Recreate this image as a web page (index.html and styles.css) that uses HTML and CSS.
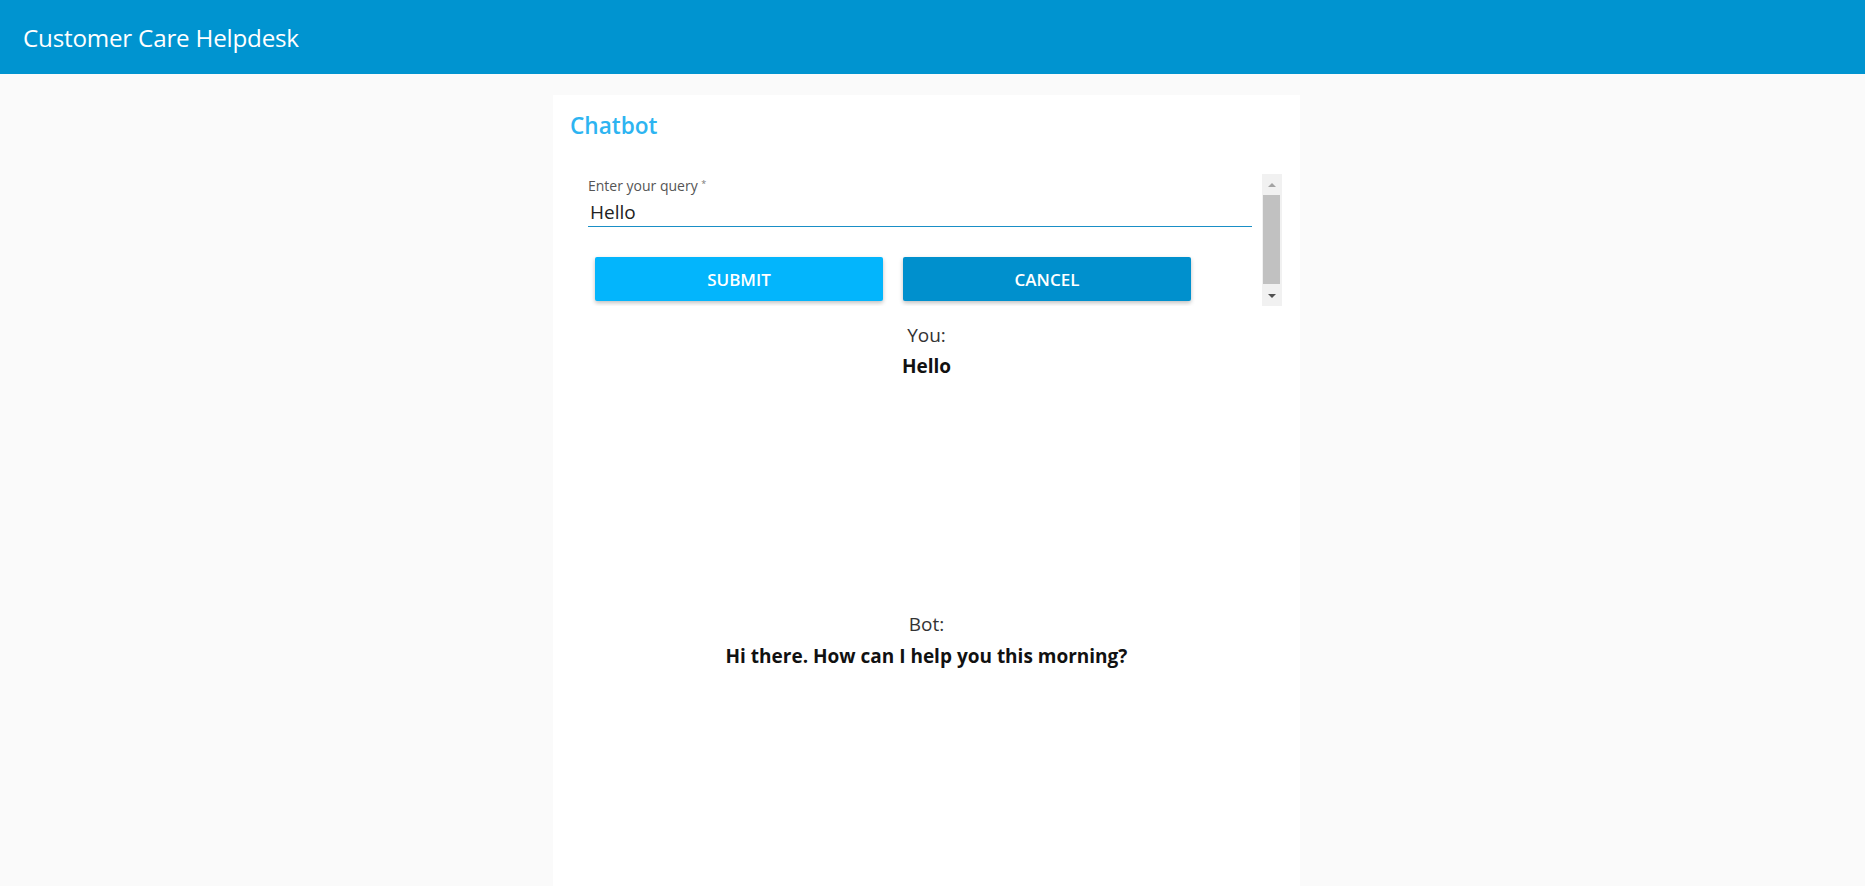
FILE: index.html
```html
<!DOCTYPE html>
<html lang="en">
<head>
<meta charset="utf-8">
<title>Customer Care Helpdesk</title>
<link rel="stylesheet" href="styles.css">
</head>
<body>
<header class="appbar">
  <h1 class="appbar-title">Customer Care Helpdesk</h1>
</header>
<main class="page">
  <section class="card">
    <h2 class="card-title">Chatbot</h2>
    <div class="form-scroll">
      <div class="form-inner">
        <div class="field">
          <label class="field-label" for="q">Enter your query <span class="req">*</span></label>
          <input class="field-input" id="q" type="text" value="Hello">
        </div>
        <div class="actions">
          <button class="btn btn-submit" type="button">SUBMIT</button>
          <button class="btn btn-cancel" type="button">CANCEL</button>
        </div>
      </div>
      <div class="scrollbar" aria-hidden="true">
        <div class="sb-btn sb-up"><span class="arrow arrow-up"></span></div>
        <div class="sb-track"><div class="sb-thumb"></div></div>
        <div class="sb-btn sb-down"><span class="arrow arrow-down"></span></div>
      </div>
    </div>
    <div class="chat">
      <div class="msg msg-you">
        <div class="msg-who">You:</div>
        <div class="msg-text">Hello</div>
      </div>
      <div class="msg msg-bot">
        <div class="msg-who">Bot:</div>
        <div class="msg-text msg-text-bot">Hi there. How can I help you this morning?</div>
      </div>
    </div>
  </section>
</main>
</body>
</html>
```
FILE: styles.css
```css
html, body {
  margin: 0;
  padding: 0;
  height: 100%;
}
body {
  background: #fafafa;
  font-family: "Open Sans", "Noto Sans", "Liberation Sans", sans-serif;
  color: #212121;
  overflow: hidden;
}
.appbar {
  height: 74px;
  background: #0094d0;
  display: flex;
  align-items: center;
  padding-left: 23px;
}
.appbar-title {
  margin: 0;
  font-size: 24.2px;
  font-weight: 400;
  color: #ffffff;
  letter-spacing: -0.2px;
}
.page {
  padding-top: 21px;
}
.card {
  width: 747px;
  margin-left: calc(50% - 379.5px);
  background: #ffffff;
  height: 800px;
  padding-top: 16px;
  box-sizing: border-box;
}
.card-title {
  margin: 0 0 0 17px;
  font-size: 22.6px;
  font-weight: 600;
  color: #2db4f1;
  line-height: 30px;
}
.form-scroll {
  margin: 33px 0 0 27px;
  width: 702px;
  height: 132px;
  display: flex;
}
.form-inner {
  flex: 1;
  min-width: 0;
  padding: 3px 10px 0 8px;
  overflow: hidden;
}
.field {
  display: flex;
  flex-direction: column;
}
.field-label {
  font-size: 14px;
  color: #555555;
  line-height: 17px;
}
.req {
  font-size: 9px;
  line-height: 0;
  vertical-align: 4px;
  color: #777777;
}
.field-input {
  border: none;
  border-bottom: 1px solid #1a8fc6;
  outline: none;
  font-family: inherit;
  font-size: 19px;
  color: #222222;
  padding: 6px 0 2px 2px;
  margin: 0;
  line-height: 24px;
  height: 33px;
  box-sizing: border-box;
  background: transparent;
}
.actions {
  display: flex;
  gap: 20px;
  margin: 30px 0 0 7px;
}
.btn {
  width: 288px;
  height: 44px;
  border: none;
  border-radius: 2px;
  color: #ffffff;
  font-family: inherit;
  font-size: 17px;
  font-weight: 600;
  padding: 0;
  box-shadow: 0 2px 4px rgba(0, 0, 0, 0.25);
}
.btn-submit {
  background: #03b5fc;
}
.btn-cancel {
  background: #0090cd;
}
.scrollbar {
  width: 20px;
  flex: none;
  background: #f1f1f1;
  display: flex;
  flex-direction: column;
}
.sb-btn {
  height: 20px;
  display: flex;
  align-items: center;
  justify-content: center;
  flex: none;
}
.sb-track {
  flex: 1;
  padding: 1px 2px 2px 1px;
  display: flex;
}
.sb-thumb {
  flex: 1;
  background: #c1c1c1;
}
.arrow {
  width: 0;
  height: 0;
  border-left: 4px solid transparent;
  border-right: 4px solid transparent;
}
.arrow-up {
  border-bottom: 4px solid #a3a3a3;
  margin-top: 2px;
}
.arrow-down {
  border-top: 4px solid #505050;
  margin-bottom: 1px;
}
.chat {
  display: flex;
  flex-direction: column;
  align-items: center;
  text-align: center;
  padding-top: 16px;
}
.msg-who {
  font-size: 19px;
  color: #333333;
  line-height: 27px;
}
.msg-text {
  font-size: 19px;
  font-weight: 700;
  color: #111111;
  line-height: 27px;
  margin-top: 4px;
}
.msg-text-bot {
  margin-top: 5px;
}
.msg-you {
  height: 289px;
}
```
